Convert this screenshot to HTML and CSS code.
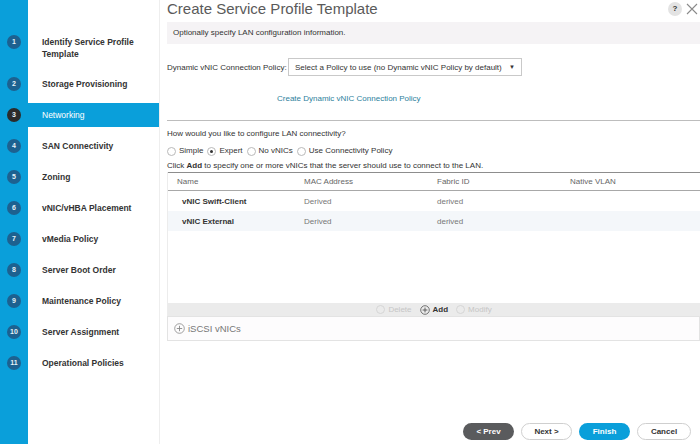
FILE: index.html
```html
<!DOCTYPE html>
<html>
<head>
<meta charset="utf-8">
<link rel="stylesheet" href="styles.css">
</head>
<body>
<div class="page">
  <aside class="sidebar">
    <div class="step first"><span class="num">1</span><span class="label">Identify Service Profile<br>Template</span></div>
    <div class="step"><span class="num">2</span><span class="label">Storage Provisioning</span></div>
    <div class="step active"><span class="num">3</span><span class="label">Networking</span></div>
    <div class="step"><span class="num">4</span><span class="label">SAN Connectivity</span></div>
    <div class="step"><span class="num">5</span><span class="label">Zoning</span></div>
    <div class="step"><span class="num">6</span><span class="label">vNIC/vHBA Placement</span></div>
    <div class="step"><span class="num">7</span><span class="label">vMedia Policy</span></div>
    <div class="step"><span class="num">8</span><span class="label">Server Boot Order</span></div>
    <div class="step"><span class="num">9</span><span class="label">Maintenance Policy</span></div>
    <div class="step"><span class="num">10</span><span class="label">Server Assignment</span></div>
    <div class="step"><span class="num">11</span><span class="label">Operational Policies</span></div>
  </aside>
  <main class="content">
    <div class="titlebar">
      <h1 class="title">Create Service Profile Template</h1>
      <div class="title-icons">
        <span class="help">?</span>
        <svg class="close" width="12" height="12" viewBox="0 0 12 12"><path d="M1 1 L11 11 M11 1 L1 11" stroke="#8a8a8a" stroke-width="1.1" fill="none"/></svg>
      </div>
    </div>
    <div class="infobar">Optionally specify LAN configuration information.</div>
    <div class="policy-row">
      <span class="policy-label">Dynamic vNIC Connection Policy:</span>
      <div class="select"><span>Select a Policy to use (no Dynamic vNIC Policy by default)</span><span class="arrow">&#9660;</span></div>
    </div>
    <div class="link-row"><span class="link">Create Dynamic vNIC Connection Policy</span></div>
    <div class="rule"></div>
    <div class="question">How would you like to configure LAN connectivity?</div>
    <div class="radios">
      <span class="radio"></span><span class="rlabel">Simple</span>
      <span class="radio checked"></span><span class="rlabel">Expert</span>
      <span class="radio"></span><span class="rlabel">No vNICs</span>
      <span class="radio"></span><span class="rlabel">Use Connectivity Policy</span>
    </div>
    <div class="hint">Click <b>Add</b> to specify one or more vNICs that the server should use to connect to the LAN.</div>
    <div class="table">
      <div class="thead">
        <span>Name</span><span>MAC Address</span><span>Fabric ID</span><span>Native VLAN</span>
      </div>
      <div class="tbody">
        <div class="trow"><span class="nm">vNIC Swift-Client</span><span>Derived</span><span>derived</span><span></span></div>
        <div class="trow alt"><span class="nm">vNIC External</span><span>Derived</span><span>derived</span><span></span></div>
      </div>
      <div class="toolbar">
        <span class="tool dis"><span class="ticon"></span>Delete</span>
        <span class="tool on"><svg width="10" height="10" viewBox="0 0 10 10"><circle cx="5" cy="5" r="4.3" fill="none" stroke="#555" stroke-width="0.8"/><path d="M5 2.6 V7.4 M2.6 5 H7.4" stroke="#555" stroke-width="0.9"/></svg>Add</span>
        <span class="tool dis"><span class="ticon"></span>Modify</span>
      </div>
    </div>
    <div class="iscsi"><svg width="11" height="11" viewBox="0 0 11 11"><circle cx="5.5" cy="5.5" r="4.8" fill="none" stroke="#888" stroke-width="0.8"/><path d="M5.5 2.8 V8.2 M2.8 5.5 H8.2" stroke="#888" stroke-width="0.9"/></svg><span>iSCSI vNICs</span></div>
    <div class="footer">
      <span class="btn prev">&lt; Prev</span>
      <span class="btn plain">Next &gt;</span>
      <span class="btn finish">Finish</span>
      <span class="btn plain cancel">Cancel</span>
    </div>
  </main>
</div>
</body>
</html>
```
FILE: styles.css
```css
* { box-sizing: border-box; }
html, body { margin: 0; padding: 0; }
body {
  width: 700px;
  height: 444px;
  overflow: hidden;
  font-family: "Liberation Sans", Arial, sans-serif;
  background: #fff;
  color: #333;
}
.page { display: flex; height: 444px; }

.sidebar {
  width: 160px;
  flex: none;
  padding-top: 30px;
  background: linear-gradient(to right, #0a9fda 28px, #fff 28px);
  border-right: 1px solid #eeeeee;
}
.step {
  display: flex;
  align-items: flex-start;
  min-height: 24px;
  margin-bottom: 7px;
}
.step.first { margin-bottom: 6px; }
.num {
  width: 14px;
  height: 14px;
  margin: 5px 7px 0 7px;
  border-radius: 50%;
  background: #1d6190;
  color: #e8f2f8;
  font-size: 7px;
  font-weight: bold;
  line-height: 14px;
  text-align: center;
  flex: none;
}
.label {
  flex: 1;
  align-self: stretch;
  padding: 6px 0 6px 14px;
  font-size: 8.5px;
  line-height: 12px;
  font-weight: bold;
  color: #333;
}
.step.active .label { background: #0a9fda; color: #fff; font-weight: normal; }
.step.active .num { background: #2b2b2b; }

.content {
  flex: 1;
  display: flex;
  flex-direction: column;
  padding-left: 7px;
  min-width: 0;
  font-size: 8px;
}
.titlebar {
  display: flex;
  justify-content: space-between;
  align-items: center;
  height: 18px;
}
.title {
  margin: 0;
  font-size: 15px;
  font-weight: normal;
  color: #5a5a5a;
  line-height: 18px;
}
.title-icons { display: flex; align-items: center; gap: 4px; padding-right: 2px; }
.help {
  width: 14px; height: 14px; border-radius: 50%;
  background: #e3e3e3; color: #333;
  font-size: 8px; font-weight: bold; line-height: 14px; text-align: center;
}
.infobar {
  margin-top: 4px;
  height: 22px;
  background: #f5f3f5;
  font-size: 8px;
  line-height: 22px;
  padding-left: 6px;
  color: #333;
}
.policy-row {
  margin-top: 14px;
  display: flex;
  align-items: center;
  font-size: 8px;
  color: #333;
}
.policy-label { width: 121px; }
.select {
  width: 234px;
  height: 18px;
  border: 1px solid #c9c9c9;
  display: flex;
  align-items: center;
  justify-content: space-between;
  padding: 0 6px 0 6px;
  color: #333;
}
.arrow { font-size: 6px; color: #333; }
.link-row { margin-top: 17px; padding-left: 110px; font-size: 8px; line-height: 12px; height: 12px; }
.link { color: #2e7f9c; }
.rule { margin-top: 15px; height: 1px; background: #bdbdbd; }
.question { margin-top: 7px; font-size: 8px; line-height: 12px; color: #333; }
.radios {
  margin-top: 5px;
  display: flex;
  align-items: center;
  font-size: 8px;
  line-height: 12px;
  color: #333;
}
.radio {
  width: 9px; height: 9px; border-radius: 50%;
  border: 1px solid #b9b9b9; background: #fff;
  margin-right: 3px; position: relative; flex: none;
}
.radio.checked::after {
  content: ""; position: absolute; left: 2px; top: 2px;
  width: 3px; height: 3px; border-radius: 50%; background: #333;
}
.rlabel { margin-right: 4px; }
.hint { margin-top: 3px; font-size: 8px; line-height: 12px; color: #333; }
.table { border-left: 1px solid #ececec; }
.thead, .trow {
  display: grid;
  grid-template-columns: 127px 133px 133px 1fr;
  font-size: 8px;
}
.thead {
  height: 19px;
  border-top: 1px solid #8d8d8d;
  border-bottom: 1px solid #a8a8a8;
  align-items: center;
  color: #666;
}
.thead span { padding-left: 9px; }
.tbody { height: 112px; }
.trow { height: 20px; align-items: center; color: #777; }
.trow span { padding-left: 9px; }
.trow .nm { padding-left: 14px; font-weight: bold; color: #333; }
.trow.alt { background: #f4f7fa; }
.toolbar {
  height: 13px;
  background: #ebebeb;
  display: flex;
  justify-content: center;
  align-items: center;
  gap: 8px;
  font-size: 8px;
}
.tool { display: flex; align-items: center; gap: 3px; }
.tool.dis { color: #c6c6c6; }
.tool.on { color: #333; font-weight: bold; }
.ticon { width: 9px; height: 9px; border-radius: 50%; border: 1px solid #d6d6d6; }
.iscsi {
  height: 25px;
  border: 1px solid #e3e3e3;
  background: #fdfcfd;
  display: flex;
  align-items: center;
  gap: 3px;
  padding-left: 6px;
  font-size: 9.5px;
  color: #777;
}
.footer {
  margin-top: auto;
  display: flex;
  justify-content: flex-end;
  gap: 7px;
  padding: 0 9px 4px 0;
}
.btn {
  width: 51px;
  height: 17px;
  border-radius: 9px;
  font-size: 8px;
  font-weight: bold;
  line-height: 15px;
  text-align: center;
  border: 1px solid transparent;
}
.btn.prev { background: #5a5b5d; color: #fff; }
.btn.plain { background: #fff; border-color: #cfcfcf; color: #333; }
.btn.finish { background: #0a9fda; color: #fff; }
.btn.cancel { width: 54px; }
```
